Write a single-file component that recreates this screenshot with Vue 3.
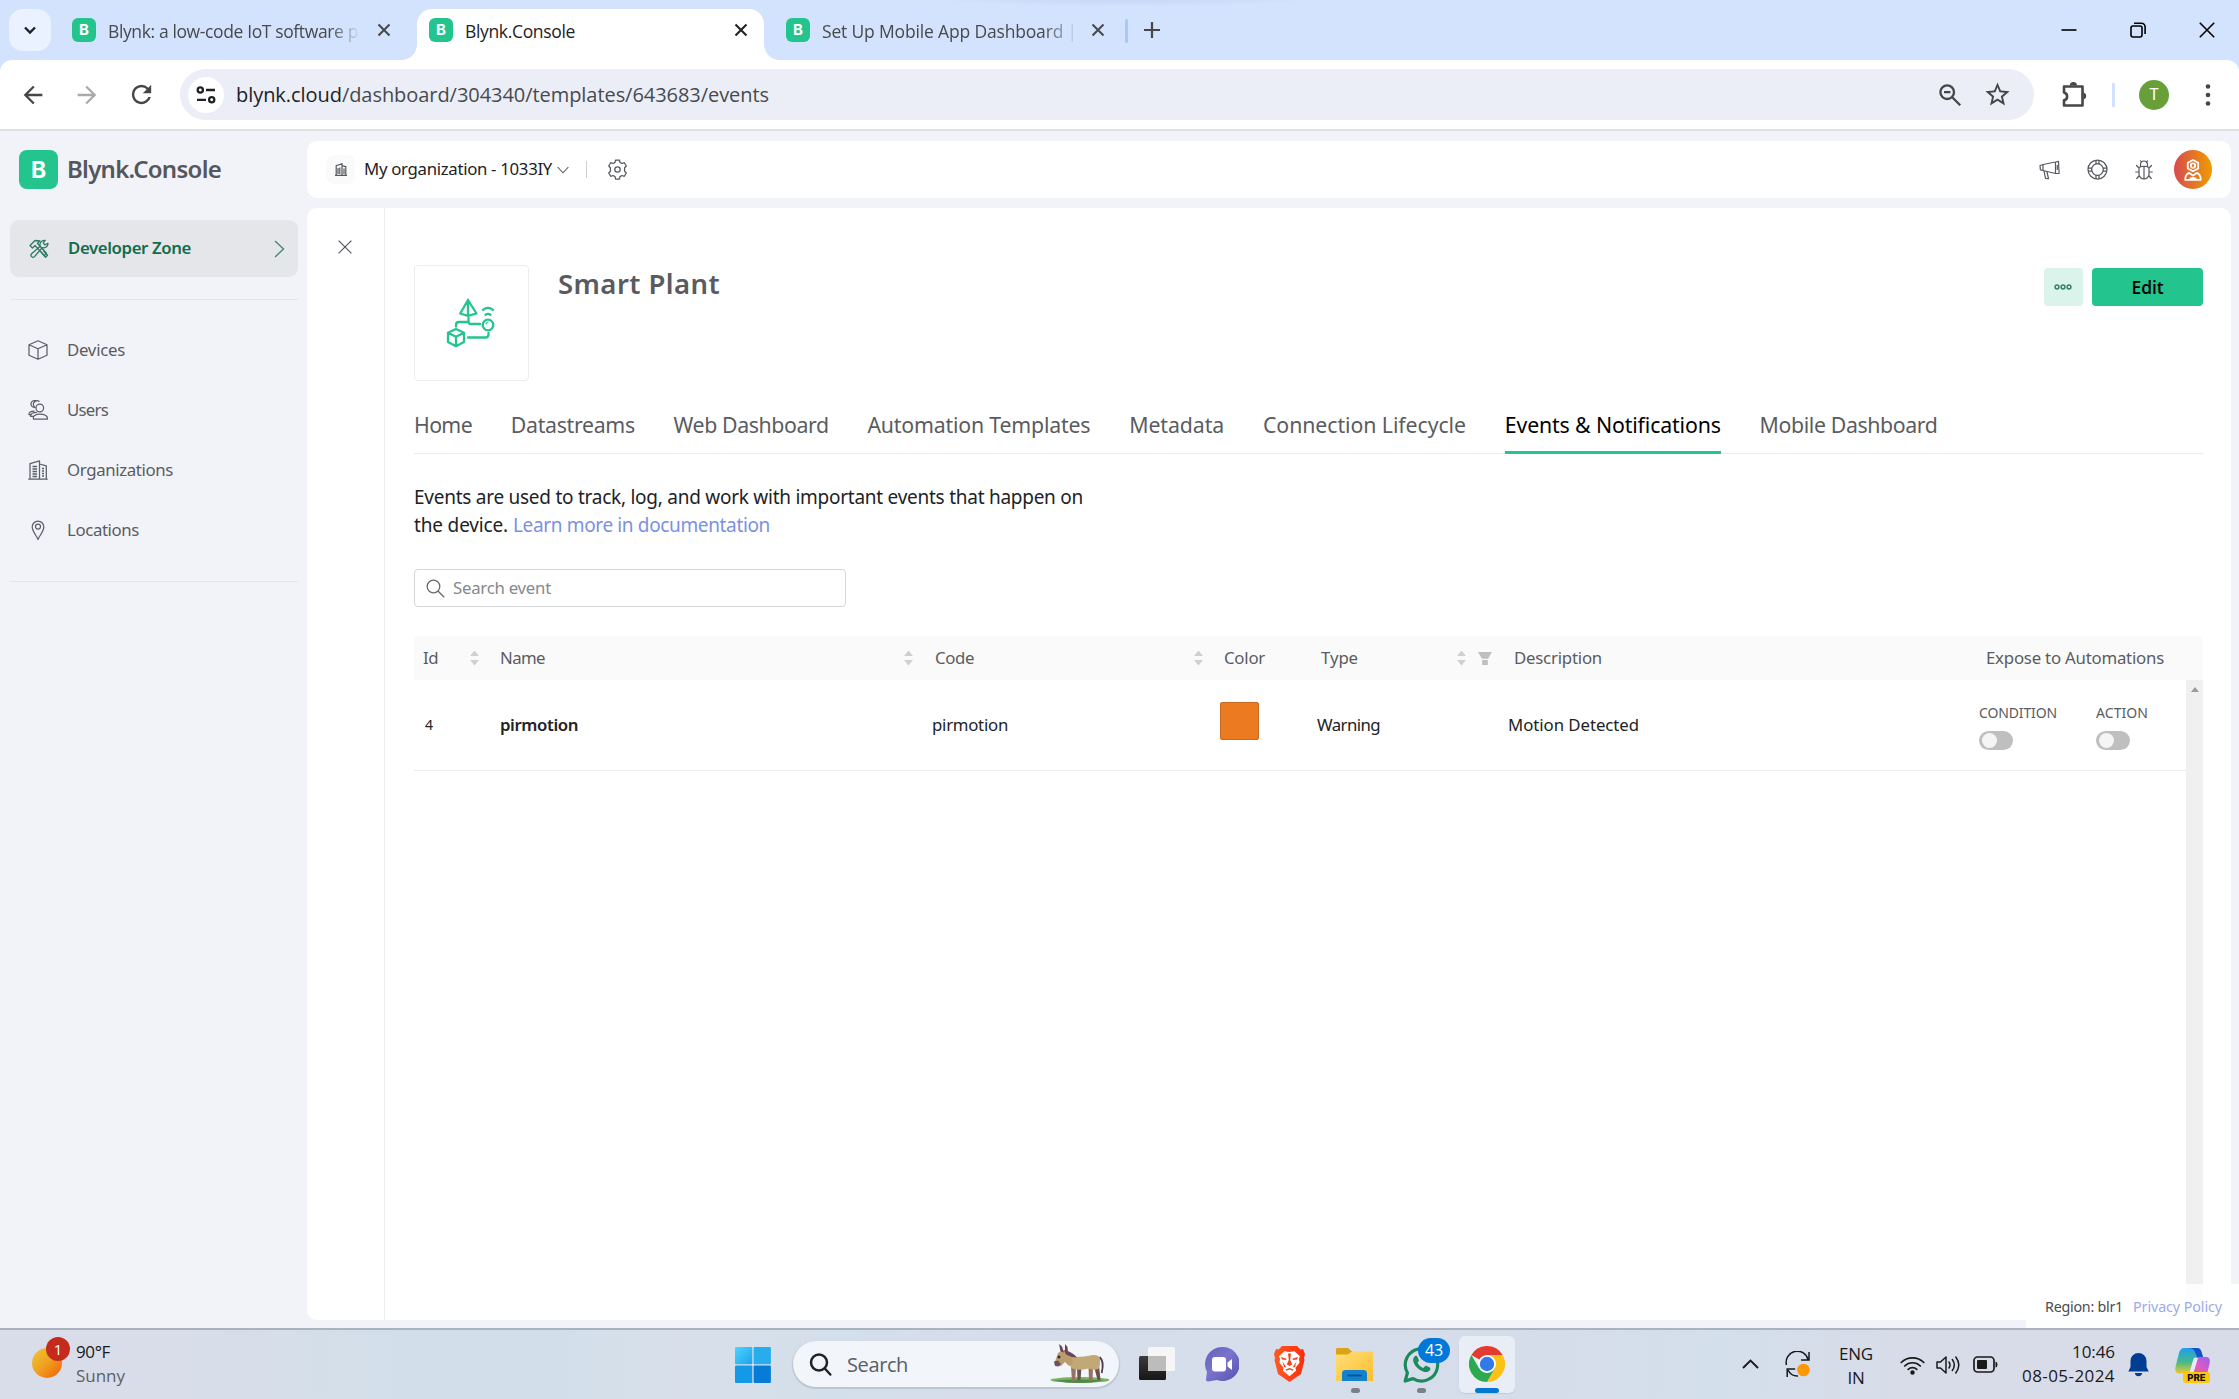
<script setup>
// Spreads a label's letters so that it takes exactly the given width.
const vFit = {
  mounted(el, { value }) {
    const range = document.createRange()
    range.selectNodeContents(el)
    const natural = range.getBoundingClientRect().width
    el.style.letterSpacing = (value - natural) / el.textContent.length + 'px'
  },
}

const browserTabs = [
  { title: 'Blynk: a low-code IoT software p', width: 250, kind: 'first' },
  { title: 'Blynk.Console', width: 110, kind: 'active' },
  { title: 'Set Up Mobile App Dashboard |', width: 255, kind: 'last' },
]

const nav = [
  { label: 'Devices', width: 58, icon: 'box' },
  { label: 'Users', width: 41, icon: 'users' },
  { label: 'Organizations', width: 106, icon: 'building' },
  { label: 'Locations', width: 72, icon: 'pin' },
]

const pageTabs = [
  { label: 'Home', width: 58 },
  { label: 'Datastreams', width: 124 },
  { label: 'Web Dashboard', width: 155 },
  { label: 'Automation Templates', width: 223 },
  { label: 'Metadata', width: 95 },
  { label: 'Connection Lifecycle', width: 203 },
  { label: 'Events & Notifications', width: 216, active: true },
  { label: 'Mobile Dashboard', width: 178 },
]
</script>

<template>
  <div class="screen">
    <header class="chrome">
      <div class="strip">
        <button class="tab-search">
          <svg width="16" height="16" viewBox="0 0 16 16" fill="none" stroke="#1f2124" stroke-width="2.4"><path d="M3 5.5l5 5 5-5" /></svg>
        </button>
        <div v-for="tab in browserTabs" :key="tab.title" class="tab" :class="tab.kind">
          <span class="favicon">B</span>
          <span class="tab-title"><span v-fit="tab.width" class="t">{{ tab.title }}</span></span>
          <svg class="tab-close" width="14" height="14" viewBox="0 0 14 14" fill="none" stroke="currentColor" stroke-width="2.1"><path d="M1.5 1.5l11 11M12.5 1.5l-11 11" /></svg>
        </div>
        <i class="strip-sep"></i>
        <svg class="plus" width="18" height="18" viewBox="0 0 18 18" stroke="#444746" stroke-width="2.2"><path d="M9 1v16M1 9h16" /></svg>
        <div class="window-controls">
          <svg width="16" height="16" viewBox="0 0 16 16" stroke="#000" stroke-width="1.6"><path d="M0.5 8h15" /></svg>
          <svg width="16" height="16" viewBox="0 0 16 16" fill="none" stroke="#000" stroke-width="1.6"><rect x="1" y="4" width="11" height="11" rx="2" /><path d="M4 1.2h7.5a3.6 3.6 0 0 1 3.6 3.6V12" /></svg>
          <svg width="16" height="16" viewBox="0 0 16 16" stroke="#000" stroke-width="1.6"><path d="M0.8 0.8l14.4 14.4M15.2 0.8L0.8 15.2" /></svg>
        </div>
      </div>
      <div class="toolbar">
        <svg class="tool" width="28" height="28" viewBox="0 0 24 24" fill="#444746"><path d="M20 11H7.83l5.59-5.59L12 4l-8 8 8 8 1.41-1.41L7.83 13H20z" /></svg>
        <svg class="tool" width="28" height="28" viewBox="0 0 24 24" fill="#a9abab"><path d="M12 4l-1.41 1.41L16.17 11H4v2h12.17l-5.58 5.59L12 20l8-8z" /></svg>
        <svg class="tool" width="29" height="29" viewBox="0 0 24 24" fill="#444746"><path d="M17.65 6.35A7.96 7.96 0 0 0 12 4a8 8 0 1 0 7.73 10h-2.08A6 6 0 1 1 12 6c1.66 0 3.14.69 4.22 1.78L13 11h7V4z" /></svg>
        <div class="omnibox">
          <span class="site">
            <svg width="20" height="20" viewBox="0 0 20 20" fill="none" stroke="#1f2124" stroke-width="2.3"><circle cx="4.3" cy="5" r="2.6" /><path d="M10 5h9M1 14.8h9" /><circle cx="15.7" cy="14.8" r="2.6" /></svg>
          </span>
          <span v-fit="533" class="t url"><b>blynk.cloud</b>/dashboard/304340/templates/643683/events</span>
          <svg class="mag" width="24" height="24" viewBox="0 0 24 24" fill="none" stroke="#444746" stroke-width="2.3"><circle cx="9.2" cy="9.2" r="6.8" /><path d="M14.2 14.2l8 8M6 9.2h6.4" /></svg>
          <svg width="29" height="29" viewBox="0 0 24 24" fill="#444746"><path d="M22 9.24l-7.19-.62L12 2 9.19 8.63 2 9.24l5.46 4.73L5.82 21 12 17.27 18.18 21l-1.63-7.03zM12 15.4l-3.76 2.27 1-4.28-3.32-2.88 4.38-.38L12 6.1l1.71 4.04 4.38.38-3.32 2.88 1 4.28z" /></svg>
        </div>
        <svg class="puzzle" width="28" height="28" viewBox="0 0 28 28"><path d="M4 5.5h18.5v19H4v-5.2a4 4 0 0 0 0-7.8z" fill="none" stroke="#444746" stroke-width="2.6" stroke-linejoin="round" /><path d="M9.8 4.6a3.6 3.6 0 0 1 7.2 0zM23.4 11.6a3.6 3.6 0 0 1 0 7z" fill="#444746" /></svg>
        <i class="tool-sep"></i>
        <span class="profile">T</span>
        <svg class="kebab" width="6" height="24" viewBox="0 0 6 24" fill="#444746"><circle cx="3" cy="3.5" r="2.3" /><circle cx="3" cy="12" r="2.3" /><circle cx="3" cy="20.5" r="2.3" /></svg>
      </div>
    </header>

    <div class="app">
      <aside class="sidebar">
        <div class="brand">
          <span class="logo">B</span>
          <span v-fit="154" class="t">Blynk.Console</span>
        </div>
        <div class="zone">
          <svg width="20" height="20" viewBox="0 0 20 20" fill="none" stroke="#2b7a60" stroke-width="1.3" stroke-linejoin="round"><path d="M1 6.5l5-5 5 .3-2.6 2.4 9 10-2 2.4L6 6.5 3.5 9z" /><path d="M19 4.5a4.4 4.4 0 0 1-5.8 4.2L5.5 17.6a2 2 0 0 1-2.9-2.8l8.6-7.6A4.4 4.4 0 0 1 16.2 1.4l-2 2.4 1.6 2 2.8-1.3zM12 13l4.5 5.2 2-2-4.3-4.6" /></svg>
          <span v-fit="123" class="t">Developer Zone</span>
          <svg class="zone-arrow" width="11" height="18" viewBox="0 0 11 18" fill="none" stroke="#4a8872" stroke-width="1.4"><path d="M1 1l8.5 8L1 17" /></svg>
        </div>
        <nav class="nav">
          <a v-for="item in nav" :key="item.label" class="nav-item">
            <svg width="20" height="20" viewBox="0 0 20 20" fill="none" stroke="#5c5f66" stroke-width="1.25" stroke-linejoin="round" stroke-linecap="round">
              <path v-if="item.icon === 'box'" d="M10 .8l9 4v10.4l-9 4-9-4V4.8zM1 4.8l9 4 9-4M10 8.8v10.4" />
              <template v-else-if="item.icon === 'users'">
                <circle cx="11.8" cy="8" r="3.8" /><path d="M11 1.3a3.5 3.5 0 1 0-4 6M8.3 1a3.5 3.5 0 1 0-2 6.5M5.5 19h14c.3-3-2.7-4.8-7.5-4.8s-7.4 2-6.5 4.8zM8.5 12.3c-3.5 0-6 1.5-6 4h2.8M6 11c-3.3 0-5.3 1.5-5 3.7h2" />
              </template>
              <template v-else-if="item.icon === 'building'">
                <path d="M.8 19.2h18.4M2 19V3.6L11.5.8V19M11.5 4l6.8 1.8V19" />
                <path d="M4.5 6.5H9M4.5 9H9M4.5 11.5H9M4.5 14H9M4.5 16.5H9M14 8.5h2M14 11h2M14 13.5h2M14 16h2" stroke-width="1.5" stroke-linecap="butt" />
              </template>
              <template v-else><path d="M10 19.5C8.2 15 4.2 11.5 4.2 6.8a5.8 5.8 0 0 1 11.6 0c0 4.7-4 8.2-5.8 12.7z" /><circle cx="10" cy="6.6" r="2.5" /></template>
            </svg>
            <span v-fit="item.width" class="t">{{ item.label }}</span>
          </a>
        </nav>
      </aside>

      <div class="main">
        <div class="topbar">
          <span class="org-icon">
            <svg width="12" height="13" viewBox="0 0 12 13" fill="none" stroke="#55585e" stroke-width="1.2"><path d="M0 12.4h12M1.2 12V2.6L7 .8V12M7 2.6l3.8 1V12M3 5v6M4.8 4.5V11M9 5.5V11" /></svg>
          </span>
          <span v-fit="188" class="t">My organization - 1033IY</span>
          <svg class="org-arrow" width="12" height="8" viewBox="0 0 12 8" fill="none" stroke="#55585e" stroke-width="1.1"><path d="M.6 1L6 6.8 11.4 1" /></svg>
          <i class="topbar-sep"></i>
          <svg width="21" height="21" viewBox="0 0 21 21" fill="none" stroke="#55585e" stroke-width="1.25" stroke-linejoin="round"><circle cx="10.5" cy="10.5" r="2.7" /><path d="M8.6 1h3.8l.6 2.4 2 1.1 2.3-.8 2 3.3-1.7 1.7v3.6l1.7 1.7-2 3.3-2.3-.8-2 1.1-.6 2.4H8.6L8 17.6l-2-1.1-2.3.8-2-3.3 1.7-1.7V8.7L1.7 7l2-3.3 2.3.8 2-1.1z" /></svg>
          <div class="topbar-tools">
            <svg width="21" height="20" viewBox="0 0 21 20" fill="none" stroke="#55585e" stroke-width="1.2" stroke-linejoin="round"><path d="M1 5.5l3-1v6l-2.6-.6zM4 4.5L16.5 2v11.5L4 10.5zM16.5 2l3-.7.6 12-3.6.2M18.3 5v5M5 10.8l1.5 7.5 3 .4-1.6-7.2" /></svg>
            <svg width="21" height="21" viewBox="0 0 21 21" fill="none" stroke="#55585e" stroke-width="1.25"><circle cx="10.5" cy="10.5" r="9.5" /><circle cx="10.5" cy="10.5" r="5.8" /><path d="M9 1v4M12 1v4M9 16v4M12 16v4M1 9h4M1 12h4M16 9h4M16 12h4" /></svg>
            <svg width="18" height="20" viewBox="0 0 18 20" fill="none" stroke="#55585e" stroke-width="1.2" stroke-linecap="round"><path d="M5.5 6V4.5a3.5 3.5 0 0 1 7 0V6M4 7.5q5-2.5 10 0v6.5a5 5 0 0 1-10 0zM9 7v12M4 8L1.5 5.5M14 8l2.5-2.5M4 12H.7M14 12h3.3M4.3 15.5L1.8 18.5M13.7 15.5l2.5 3M6.5 1.8L5.5.8M11.5 1.8l1-1" /></svg>
            <span class="me">
              <svg width="18" height="22" viewBox="0 0 18 22" fill="none" stroke="#fff" stroke-width="1.8" stroke-linejoin="round"><path d="M9 1l5.2 2.8v5.7L9 12.3 3.8 9.5V3.8z" /><circle cx="9" cy="6.6" r="2.2" /><path d="M1.2 20.8c0-4 2-6.6 4-6.8L9 16.6l3.8-2.6c2 .2 4 2.8 4 6.8zM6 20.5c.5-2 5.5-2 6 0" /></svg>
            </span>
          </div>
        </div>

        <div class="panel">
          <div class="panel-side">
            <svg width="14" height="14" viewBox="0 0 14 14" stroke="#55585e" stroke-width="1.2"><path d="M.6.6l12.8 12.8M13.4.6L.6 13.4" /></svg>
          </div>
          <div class="content">
            <div class="head">
              <div class="thumb">
                <svg width="50" height="50" viewBox="0 0 50 50" fill="none" stroke="#24c48e" stroke-width="2.3" stroke-linejoin="round" stroke-linecap="round">
                  <path d="M22 2l8.5 13.5L22 17.8l-7.8-2.3zM22 2v15" />
                  <path d="M22.5 20v3.5c0 2 1 2.5 2.5 2.5h9M22.5 24H13c-2 0-3 1-3 3v1.5M22 39.5h17.500c2 0 3-1 3-3V35" />
                  <circle cx="42" cy="27" r="5.3" /><path d="M40.1 26q.4-1.800 2-2" stroke-width="1.2" />
                  <path d="M37 11.8q5-3.800 10 0M39.5 16.7q2.500-1.600 5 0" />
                  <path d="M10 31l8 3.8v9.200l-8 4.200-8-4.200v-9.200zM2 34.800l8 4 8-4M10 39v9" />
                </svg>
              </div>
              <h1 v-fit="162" class="t">Smart Plant</h1>
              <div class="actions">
                <button class="more">
                  <svg width="18" height="6" viewBox="0 0 18 6" fill="none" stroke="#36806a" stroke-width="1.5"><circle cx="3" cy="3" r="1.9" /><circle cx="9" cy="3" r="1.9" /><circle cx="15" cy="3" r="1.9" /></svg>
                </button>
                <button class="edit"><span v-fit="32" class="t">Edit</span></button>
              </div>
            </div>

            <div class="tabs">
              <a v-for="tab in pageTabs" :key="tab.label" class="page-tab" :class="{ on: tab.active }"><span v-fit="tab.width" class="t">{{ tab.label }}</span></a>
            </div>

            <p class="intro">
              <span v-fit="669" class="t">Events are used to track, log, and work with important events that happen on</span><br />
              <span v-fit="94" class="t">the device.</span><a v-fit="257" class="t">Learn more in documentation</a>
            </p>

            <div class="search">
              <svg width="19" height="19" viewBox="0 0 19 19" fill="none" stroke="#66696f" stroke-width="1.3"><circle cx="7.5" cy="7.5" r="6.3" /><path d="M12 12l6.2 6.2" /></svg>
              <span v-fit="98" class="t">Search event</span>
            </div>

            <div class="grid thead">
              <div class="c-id"><span v-fit="15" class="t">Id</span><i class="sort"></i></div>
              <div class="c-name"><span v-fit="45" class="t">Name</span><i class="sort"></i></div>
              <div class="c-code"><span v-fit="39" class="t">Code</span><i class="sort"></i></div>
              <div class="c-color"><span v-fit="41" class="t">Color</span></div>
              <div class="c-type"><span v-fit="37" class="t">Type</span><i class="sort"></i>
                <svg class="filter" width="14" height="13" viewBox="0 0 14 13" fill="#bfbfbf"><path d="M0 0h14L10 6.8H4zM4.2 8h5.6v5H4.2z" /></svg>
              </div>
              <div class="c-desc"><span v-fit="88" class="t">Description</span></div>
              <div class="c-auto"><span v-fit="178" class="t">Expose to Automations</span></div>
            </div>
            <div class="tbody">
              <div class="grid row">
                <div class="c-id"><span class="t">4</span></div>
                <div class="c-name"><span v-fit="78" class="t">pirmotion</span></div>
                <div class="c-code"><span v-fit="76" class="t">pirmotion</span></div>
                <div class="c-color"><i class="swatch"></i></div>
                <div class="c-type"><span v-fit="63" class="t">Warning</span></div>
                <div class="c-desc"><span v-fit="131" class="t">Motion Detected</span></div>
                <div class="c-auto">
                  <div class="toggle"><span v-fit="78" class="t">CONDITION</span><i></i></div>
                  <div class="toggle"><span v-fit="52" class="t">ACTION</span><i></i></div>
                </div>
              </div>
              <div class="scroll"><i></i></div>
            </div>
          </div>
        </div>
      </div>

      <footer class="legal">
        <span v-fit="78" class="t">Region: blr1</span>
        <a v-fit="89" class="t">Privacy Policy</a>
      </footer>
    </div>

    <div class="taskbar">
      <div class="weather">
        <div class="sun"><b>1</b></div>
        <div class="lines"><span v-fit="34" class="t">90°F</span><br /><span v-fit="49" class="t dim">Sunny</span></div>
      </div>

      <div class="dock">
        <svg class="start" width="36" height="36" viewBox="0 0 36 36">
          <defs><linearGradient id="win" x1="0" y1="0" x2="1" y2="1"><stop offset="0" stop-color="#4fd4ff" /><stop offset="1" stop-color="#1ba3ea" /></linearGradient></defs>
          <rect width="17.3" height="17.3" rx="1" fill="url(#win)" /><rect x="18.6" width="17.3" height="17.3" rx="1" fill="#27adee" /><rect y="18.6" width="17.3" height="17.3" rx="1" fill="#1399e6" /><rect x="18.6" y="18.6" width="17.3" height="17.3" rx="1" fill="#067cd6" />
        </svg>
        <div class="find">
          <svg width="23" height="23" viewBox="0 0 23 23" fill="none" stroke="#1f2328" stroke-width="2.5" stroke-linecap="round"><circle cx="10" cy="9.5" r="8" /><path d="M15.8 15.5l5.5 6" /></svg>
          <span v-fit="61" class="t">Search</span>
          <svg class="donkey" width="60" height="40" viewBox="0 0 60 40">
            <ellipse cx="30" cy="36" rx="29.5" ry="3" fill="#7cb15f" /><path d="M4 36.500q24 5 50 0-24-2-50 0z" fill="#4f8a48" />
            <path d="M27 23h4.500l-1 13h-3zM44 22h5l1.500 14h-3z" fill="#6d4f4e" /><path d="M21 23h5l-.8 14h-3.200zM38.500 23h4.500l-.5 14h-3.500z" fill="#94745f" />
            <path d="M49.500 13q5 4 2.200 16" stroke="#4b3a52" stroke-width="1.8" fill="none" />
            <path d="M17 10q4 2.500 8 3 10 0 18-2 6-.5 7 4 .5 6-1.500 10-5 1.500-10-.5-6 1.500-12 1.200-5-.2-6.500-4.200-1-5-5-7z" fill="#c2a877" />
            <path d="M8 9l4-2.500h5l5 6 1 6.500-4 3-4-4-4 4-3.500 0L4.500 19z" fill="#bb9d6d" />
            <path d="M14 6q8 1.500 13 7.500-6 0-11-3zM9 0l3 2.500 2 6-3.500-1zM15 0l2.500 3 .5 5.500-3-1z" fill="#6b4458" />
            <path d="M4 17.500l4-1 3 3.500-2.500 2.500-3.500-.5z" fill="#6e5266" /><circle cx="9" cy="13" r="1.5" fill="#2c274b" />
          </svg>
        </div>
        <svg class="taskview" width="36" height="34" viewBox="0 0 36 34">
          <defs><linearGradient id="tv" x1="0" y1="0" x2="0" y2="1"><stop offset="0" stop-color="#3b3b3b" /><stop offset="1" stop-color="#161616" /></linearGradient></defs>
          <rect y="9" width="27" height="24" rx="1.5" fill="url(#tv)" /><rect x="9" width="27" height="24" rx="1.5" fill="#f6f6f7" /><rect x="9" y="9" width="18" height="15" fill="#bcbcbd" />
        </svg>
        <svg class="meet" width="34" height="36" viewBox="0 0 34 36">
          <defs><linearGradient id="mt" x1="0" y1="0" x2="1" y2="1"><stop offset="0" stop-color="#5f62b5" /><stop offset=".45" stop-color="#7a74cd" /><stop offset="1" stop-color="#5450b0" /></linearGradient></defs>
          <path d="M17 1a17 17 0 1 1-5 33l-9 1.5q-2.500 0-2-2.500l1-7A17 17 0 0 1 17 1z" fill="url(#mt)" /><rect x="7" y="11" width="14" height="14.5" rx="3" fill="#fff" /><path d="M22.5 16.5l4.500-3.500v11l-4.500-3.500z" fill="#fff" />
        </svg>
        <svg class="brave" width="31" height="36" viewBox="0 0 31 36">
          <defs><linearGradient id="br" x1="0" y1="0" x2="1" y2="0"><stop offset="0" stop-color="#ff5a26" /><stop offset="1" stop-color="#fb2d0c" /></linearGradient></defs>
          <path d="M8 0h15l3.5 3.5 2.5-.5 2 5-1 4 .5 2-3.500 14L15.500 36 4 28 .5 14l.5-2L0 8l2-5 2.500.5z" fill="url(#br)" />
          <path d="M15.500 6l5-.8 5.500 5-1 2.500.5 4-4 5 .5 3-6.500 5.500-6.500-5.500.5-3-4-5 .5-4-1-2.500 5.500-5z" fill="#fff" />
          <path d="M14 7.500h3l-.8 6.500 2 4.500-2.700 1.500-2.700-1.500 2-4.500zM7 11l5 1.500 .5 1.500-4.500-.5zM24 11l-5 1.500-.5 1.500 4.500-.5zM11.500 23.500l4-1.600 4 1.600-.8 1.200-3.200-1.300-3.200 1.300zM8.500 15.500l4 6-2.500-.5zM22.500 15.500l-4 6 2.500-.5z" fill="#f5421c" />
        </svg>
        <svg class="files" width="37" height="35" viewBox="0 0 37 35">
          <defs><linearGradient id="fo" x1="0" y1="0" x2="1" y2="1"><stop offset="0" stop-color="#ffdf7b" /><stop offset="1" stop-color="#fcbd2b" /></linearGradient></defs>
          <path d="M1.500 1h10.500l4 3.500V9H0V2.500A1.500 1.500 0 0 1 1.500 1z" fill="#dda316" /><path d="M12 7.500l4-3h19.500A1.500 1.500 0 0 1 37 6v28H0V7.500z" fill="url(#fo)" />
          <path d="M6 34V26.500A3.500 3.500 0 0 1 9.500 23h18a3.500 3.500 0 0 1 3.500 3.500V34z" fill="#1282cf" /><path d="M11.500 28.500h14" stroke="#0a4f8c" stroke-width="1.8" />
        </svg>
        <div class="wa">
          <svg width="38" height="38" viewBox="0 0 38 38" fill="none"><path d="M3.200 35l2.200-8.200A16.200 16.200 0 1 1 11 32.600z" stroke="#1d8a5b" stroke-width="3.2" stroke-linejoin="round" /><path d="M12.500 10.500c1-1 2.500-.8 3 .5l1.300 3c.3 1-.6 2-1.300 2.600 1 2.500 3 4.400 5.700 5.500l2-2c.5-.6 1-.5 1.600-.2l3 1.500c1 .5.600 2.300-.3 3.300-1.500 1.600-4 1.700-6.500.8-4.300-1.500-7.600-4.700-9.200-8.500-.9-2.300-1-4.800.7-6.500z" fill="#1d8a5b" /></svg>
          <b v-fit="18">43</b>
        </div>
        <div class="chrome-app">
          <svg width="36" height="36" viewBox="0 0 36 36"><path d="M18 18L2.4 9A18 18 0 0 1 33.6 9z" fill="#e33b2e" /><path d="M18 18V9h15.600A18 18 0 0 1 18 36l7.800-13.500z" fill="#fbc116" /><path d="M18 18l7.800 4.500L18 36A18 18 0 0 1 2.400 9l7.800 13.500z" fill="#2da94f" /><circle cx="18" cy="18" r="9" fill="#fff" /><circle cx="18" cy="18" r="7.2" fill="#3279ea" /></svg>
        </div>
      </div>

      <div class="tray">
        <svg width="17" height="10" viewBox="0 0 17 10" fill="none" stroke="#1a1a1a" stroke-width="1.9"><path d="M1 9l7.5-7.5L16 9" /></svg>
        <svg class="sync" width="26" height="26" viewBox="0 0 26 26" fill="none" stroke="#1a1a1a" stroke-width="1.5"><path d="M1.5 14A11 11 0 0 1 23 8.5M24 1v8h-8M13 25a10.5 10.5 0 0 1-10-6M2.200 26v-8h8" /><circle cx="18.5" cy="19" r="6.3" fill="#ff9800" stroke="none" /></svg>
        <div class="lines lang"><span v-fit="34" class="t">ENG</span><br /><span v-fit="17" class="t">IN</span></div>
        <svg class="wifi" width="25" height="20" viewBox="0 0 25 20" fill="none" stroke="#1a1a1a" stroke-width="1.7" stroke-linecap="round"><path d="M1.2 7.5a16 16 0 0 1 22.600 0M4.700 11a11 11 0 0 1 15.600 0M8.200 14.300a6.200 6.200 0 0 1 8.600 0" /><circle cx="12.5" cy="17.6" r="1.4" fill="#1a1a1a" /></svg>
        <svg class="vol" width="25" height="20" viewBox="0 0 25 20" fill="none" stroke="#1a1a1a" stroke-width="1.5" stroke-linecap="round" stroke-linejoin="round"><path d="M1 7h3.5L10 2v16l-5.5-5H1zM13 7q2 3 0 6M16.3 4.5q4 5.500 0 11M19.800 2q6 8 0 16" /></svg>
        <svg class="bat" width="25" height="17" viewBox="0 0 25 17"><rect x="1" y="1" width="20" height="15" rx="3.5" fill="none" stroke="#1a1a1a" stroke-width="1.7" /><rect x="4" y="4" width="10" height="9" rx="1" fill="#1a1a1a" /><path d="M22.5 5.5q2 .3 2 3t-2 3z" fill="#1a1a1a" /></svg>
        <div class="lines clock"><span v-fit="43" class="t">10:46</span><br /><span v-fit="93" class="t">08-05-2024</span></div>
        <svg class="bell" width="21" height="24" viewBox="0 0 21 24" fill="#003e92"><path d="M10.5 0A8 8 0 0 1 18.5 8v6l2.200 4.500H.3L2.500 14V8a8 8 0 0 1 8-8zM6.800 20h7.400q-.7 3.200-3.700 3.200T6.800 20z" /></svg>
        <div class="copilot">
          <svg width="35" height="28" viewBox="0 0 35 28">
            <defs>
              <linearGradient id="cpl" x1="0" y1="0" x2="0" y2="1"><stop offset="0" stop-color="#1f9df1" /><stop offset=".55" stop-color="#45b98a" /><stop offset="1" stop-color="#f1ca2b" /></linearGradient>
              <linearGradient id="cpr" x1="0" y1="1" x2="1" y2="0"><stop offset="0" stop-color="#f4655e" /><stop offset=".5" stop-color="#dc5bc0" /><stop offset="1" stop-color="#9d5cf0" /></linearGradient>
            </defs>
            <path d="M9 0h13q3.500 0 4.500 4l1.500 5h-6q-3 0-4 3.500L15 23q-.8 2.500-3 2.500H4Q-.5 25.500.5 19L4 5q1.500-5 5-5z" fill="url(#cpl)" /><path d="M13 0h9q3.500 0 4.500 4l1.500 5h-6l-2-5q-1.500-4-7-4z" fill="#1552c8" />
            <path d="M22 9h9q5 0 3.500 7l-3 12H13l3.500-3 3-12Q20.500 9 22 9z" fill="url(#cpr)" /><path d="M19 10h4l-4.500 15h-4z" fill="#e4e9fb" />
          </svg>
          <b>PRE</b>
        </div>
      </div>
    </div>
  </div>
</template>

<style>
body { background: #f2f3f8; overflow: hidden; }
</style>

<style scoped>
* { box-sizing: border-box; }
.screen { width: 2239px; height: 1399px; display: flex; flex-direction: column; font-family: "Noto Sans", "Open Sans", sans-serif; font-size: 16.8px; color: #5a5c61; overflow: hidden; }
svg { display: block; flex: none; }
i { display: block; flex: none; }
button { border: 0; padding: 0; display: flex; align-items: center; justify-content: center; font: inherit; }
.t { display: inline-block; white-space: pre; flex: none; }

.chrome { background: #d3e2fd; font-family: "Open Sans", sans-serif; color: #474a4d; }
.strip { height: 60px; display: flex; align-items: flex-start; padding: 9px 24px 0 9px; background: radial-gradient(190px 6px at 1125px 0, #c6d8f5, transparent); }
.tab-search { width: 42px; height: 42px; border-radius: 14px; background: #ebf2ff; }
.tab { height: 51px; display: flex; align-items: center; padding-bottom: 9px; position: relative; font-size: 17.5px; }
.first { width: 366px; padding-left: 21px; }
.active { width: 347px; padding-left: 12px; background: #fff; border-radius: 15px 15px 0 0; color: #1f2124; }
.last { width: 352px; padding-left: 22px; }
.active::before, .active::after { content: ""; position: absolute; bottom: 0; width: 15px; height: 15px; }
.active::before { right: 100%; background: radial-gradient(circle at 0 0, transparent 14.5px, #fff 15px); }
.active::after { left: 100%; background: radial-gradient(circle at 100% 0, transparent 14.5px, #fff 15px); }
.favicon { width: 24px; height: 24px; border-radius: 6px; background: #24c48e; color: #fff; font: 700 15px/24px Inter, sans-serif; text-align: center; margin-right: 12px; }
.tab-title { width: 260px; line-height: 26px; margin-top: 2px; }
.first .tab-title { mask-image: linear-gradient(90deg, #000 222px, transparent 252px); }
.last .tab-title { mask-image: linear-gradient(90deg, #000 222px, transparent 256px); }
.tab-close { margin-left: 9px; }
.strip-sep { width: 3px; height: 24px; border-radius: 2px; background: #a8c7fa; margin: 10px 15px 0 9px; }
.plus { margin-top: 12px; }
.window-controls { margin: 13px 0 0 auto; display: flex; gap: 53px; }
.toolbar { height: 71px; background: #fff; border-bottom: 2px solid #dfe1e0; border-radius: 12px 12px 0 0; display: flex; align-items: center; padding-left: 19px; }
.tool { margin-right: 26px; }
.omnibox { width: 1854px; height: 51px; border-radius: 26px; background: #ebeef7; display: flex; align-items: center; padding: 0 22px 0 8px; font-size: 20px; margin-left: -2px; }
.site { width: 36px; height: 36px; border-radius: 50%; background: #fff; display: flex; align-items: center; justify-content: center; margin-right: 12px; }
.url b { font-weight: 400; color: #1f2124; }
.mag { margin-left: auto; margin-right: 21px; }
.puzzle { margin-left: 26px; }
.tool-sep { width: 3px; height: 24px; background: #d3e3fd; margin: 0 24px 0 24px; }
.profile { width: 30px; height: 30px; border-radius: 50%; background: #689f38; color: #fff; font: 16px/30px Roboto, sans-serif; text-align: center; }
.kebab { margin-left: 36px; }

.app { height: 1197px; background: #f2f3f8; display: flex; position: relative; }
.app .t { padding-bottom: 2px; }
.sidebar { width: 307px; padding-top: 19px; }
.brand { height: 39px; display: flex; align-items: center; padding-left: 19px; gap: 9px; font-size: 24px; font-weight: 600; color: #55575c; }
.logo { width: 39px; height: 39px; border-radius: 8px; background: #24c48e; color: #fff; font: 700 23px/40px Inter, sans-serif; text-align: center; }
.zone { margin: 31px 9px 0 10px; height: 57px; border-radius: 9px; background: #e4e6ea; display: flex; align-items: center; padding: 0 13px 0 19px; gap: 19px; color: #146c4d; font-weight: 600; }
.zone-arrow { margin-left: auto; }
.nav { margin: 22px 9px 0 10px; padding: 20px 0 21px; border: solid #e2e4e9; border-width: 1px 0; }
.nav-item { height: 60px; display: flex; align-items: center; padding-left: 18px; gap: 19px; }
.app .nav .t { padding-bottom: 1px; }

.main { flex: 1; padding: 10px 8px 8px 0; display: flex; flex-direction: column; gap: 10px; }
.topbar { height: 57px; border-radius: 10px; background: #fff; display: flex; align-items: center; padding: 0 19px; color: #1f2124; }
.org-icon { width: 29px; height: 29px; border-radius: 8px; background: #fafafa; display: flex; align-items: center; justify-content: center; margin-right: 9px; }
.org-arrow { margin-left: 5px; }
.topbar-sep { width: 1px; height: 17px; background: #cfcfcf; margin: 0 20px 0 17px; }
.topbar-tools { margin-left: auto; display: flex; align-items: center; gap: 27px; }
.me { width: 38px; height: 39px; border-radius: 50%; background: linear-gradient(90deg, #d64b50, #f09c00); display: flex; align-items: center; justify-content: center; margin-left: -6px; }

.panel { flex: 1; border-radius: 10px; background: #fff; display: flex; overflow: hidden; }
.panel-side { width: 78px; border-right: 1px solid #ededed; padding: 32px 0 0 31px; }
.content { flex: 1; padding: 57px 28px 0 29px; display: flex; flex-direction: column; }
.head { display: flex; align-items: flex-start; height: 116px; }
.thumb { width: 115px; height: 116px; border: 1px solid #ededed; border-radius: 4px; display: flex; align-items: center; justify-content: center; padding-right: 1px; }
h1 { margin: 0 0 0 29px; font: 600 27.5px/38px "Noto Sans", sans-serif; color: #5a5b5f; }
.actions { margin: 3px 0 0 auto; display: flex; gap: 9px; }
.more { width: 39px; height: 38px; border-radius: 4px; background: #dbf4eb; padding-right: 1px; }
.edit { width: 111px; height: 38px; border-radius: 4px; background: #24c48e; color: #000; font: 600 17.5px/36px "Open Sans", sans-serif; }
.app .edit .t { padding-bottom: 0; }
.tabs { height: 73px; border-bottom: 1px solid #ededed; display: flex; gap: 38.8px; padding-top: 27px; font-size: 21.3px; }
.page-tab { height: 46px; line-height: 33px; flex: none; }
.on { color: #000; border-bottom: 3px solid #24c48e; }
.intro { margin: 29px 0 0; font-size: 19px; line-height: 28px; color: #212226; height: 56px; }
.app .intro .t { vertical-align: top; padding-bottom: 0; }
.intro a { color: #7b91e0; margin-left: 5px; }
.search { margin-top: 30px; width: 432px; height: 38px; border: 1px solid #d6d7d9; border-radius: 4px; display: flex; align-items: center; padding-left: 11px; gap: 8px; color: #87898d; }
.app .search .t, .app .thead .t { padding-bottom: 1px; }
.grid { display: flex; }
.grid > div { display: flex; align-items: center; flex: none; }
.thead { margin-top: 29px; height: 44px; background: #fafafa; border-radius: 5px 5px 0 0; }
.c-id { width: 77px; padding-left: 9px; }
.c-name { width: 434px; padding-left: 9px; }
.c-code { width: 290px; padding-left: 10px; }
.c-color { width: 96px; padding-left: 9px; }
.c-type { width: 193px; padding-left: 10px; }
.c-desc { width: 472px; padding-left: 10px; }
.c-auto { padding-left: 10px; }
.sort { width: 9px; height: 15px; margin-left: auto; margin-right: 12px; background: #d0d0d0; clip-path: polygon(50% 0, 100% 37%, 0 37%, 0 63%, 100% 63%, 50% 100%, 0 63%, 0 37%); }
.filter { margin-right: 12px; }
.tbody { height: 640px; display: flex; justify-content: space-between; }
.row { height: 91px; width: 1772px; border-bottom: 1px solid #ececec; color: #212226; padding-top: 1px; }
.row .c-id { padding-left: 11px; font-size: 14px; }
.row .c-name { font-weight: 600; }
.row .c-code { padding-left: 7px; }
.row .c-color { padding-left: 5px; padding-bottom: 9px; }
.row .c-type { padding-left: 6px; }
.row .c-desc { padding-left: 4px; }
.swatch { width: 39px; height: 38px; border-radius: 2px; background: #ec7a21; border: 1px solid #c96a20; }
.row .c-auto { padding-left: 3px; gap: 39px; align-items: flex-start; padding-top: 22px; font-size: 14px; color: #5a5c61; }
.app .toggle .t { display: block; line-height: 20px; padding-bottom: 0; }
.toggle i { width: 34px; height: 19px; border-radius: 10px; background: #bfbfbf; margin-top: 8px; padding: 2px 3px; }
.toggle i::before { content: ""; display: block; width: 15px; height: 15px; border-radius: 50%; background: #f5f5f5; }
.scroll { width: 17px; background: #f0f0f0; padding: 7px 0 0 5px; }
.scroll i { width: 8px; height: 5px; background: #9b9b9b; clip-path: polygon(50% 0, 100% 100%, 0 100%); }
.legal { position: absolute; right: 0; bottom: 0; width: 213px; height: 44px; background: rgba(255, 255, 255, .85); display: flex; align-items: center; padding: 2px 0 0 19px; gap: 10px; font-size: 14.3px; color: #4a4c50; }
.legal a { color: #9daae9; }

.taskbar { height: 71px; border-top: 2px solid #a9b2be; background: linear-gradient(90deg, #d9dde9 0, #d8dde9 180px, #d2dfea 400px, #d2dfea 560px, #d8dfea 680px, #d3dfea 850px, #d7ddea 960px, #d5deea 1250px, #d6ddea 1550px, #d3dfeb 1720px, #d8dce9 1900px, #d8dce9); font-family: "Open Sans", sans-serif; font-size: 17px; color: #1a1a1a; display: flex; align-items: flex-start; }
.lines { line-height: 24px; }
.weather { width: 735px; display: flex; padding: 10px 0 0 32px; }
.sun { width: 30px; height: 30px; margin: 8px 14px 0 0; border-radius: 50%; background: linear-gradient(135deg, #ecc034 10%, #f0a020 50%, #f06a0a 90%); position: relative; }
.sun b { position: absolute; left: 14px; top: -11px; width: 24px; height: 24px; border-radius: 50%; background: #c42b1c; color: #fff; font: 15px/24px "Open Sans", sans-serif; text-align: center; }
.dim { color: #5b6068; }
.dock { width: 1007px; height: 69px; display: flex; align-items: flex-start; }
.start { margin: 17px 22px 0 0; }
.find { width: 326px; height: 46px; border-radius: 23px; margin: 11px 20px 0 0; background: #f2f5fa; box-shadow: 0 1px 1px 1px #bcc4cf; display: flex; align-items: center; padding-left: 16px; font-size: 20px; color: #5a5d62; }
.find .t { margin-left: 15px; }
.donkey { margin-left: auto; margin-right: 9px; }
.taskview { margin: 17px 30px 0 0; }
.meet { margin: 16px 35px 0 0; }
.brave { margin: 16px 31px 0 0; }
.files { margin: 17px 29px 0 0; }
.wa { position: relative; margin: 16px 19px 0 0; width: 38px; }
.files, .wa svg { overflow: visible; }
.wa b { position: absolute; left: 16px; top: -8px; width: 32px; height: 25px; border-radius: 13px; background: #0078d7; color: #fff; font: 16px/25px "Open Sans", sans-serif; text-align: center; }
.chrome-app { width: 56px; height: 57px; margin-top: 6px; border-radius: 6px; background: #e9edf5; box-shadow: 0 1px 1px #c3cad6; padding: 10px 0 0 10px; position: relative; }
.chrome-app::after, .wa::after, .wa::before { content: ""; position: absolute; bottom: 0; left: 16px; width: 24px; height: 5px; border-radius: 3px; background: #0078d4; }
.wa::after, .wa::before { width: 9px; height: 5px; background: #7c7f86; bottom: -9px; left: 15px; }
.wa::before { left: -51px; }
.tray { display: flex; height: 69px; align-items: flex-start; }
.tray > svg:first-child { margin-top: 29px; }
.sync { margin: 21px 0 0 26px; }
.lang { margin: 12px 0 0 27px; width: 36px; text-align: center; }
.wifi { margin: 25px 0 0 26px; }
.vol { margin: 25px 0 0 11px; }
.bat { margin: 26px 0 0 12px; }
.clock { margin: 10px 0 0 16px; width: 101px; text-align: right; }
.bell { margin: 23px 0 0 13px; }
.copilot { margin: 18px 0 0 26px; position: relative; width: 35px; height: 35px; }
.copilot b { position: absolute; left: 8px; top: 24px; width: 27px; height: 11px; border-radius: 3px; background: #fdc70c; color: #111; font: 800 9.5px/11px Inter, sans-serif; text-align: center; }
</style>
